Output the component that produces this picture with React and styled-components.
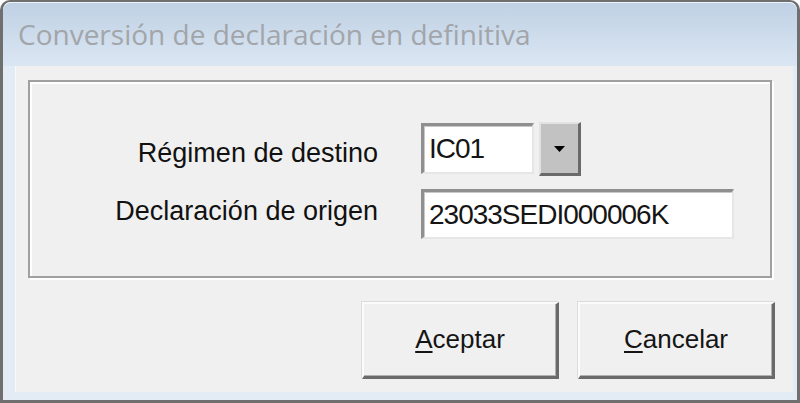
import React from "react";
import styled, { createGlobalStyle } from "styled-components";

const Global = createGlobalStyle`
  html, body { margin: 0; padding: 0; background: #ffffff; }
  body { width: 800px; height: 403px; overflow: hidden; }
  * { box-sizing: border-box; }
`;

const Window = styled.div`
  width: 800px;
  height: 403px;
  border: 3px solid #6f6f6f;
  border-top-width: 2px;
  border-radius: 10px 10px 0 0;
  background: #e3ebf5;
  display: flex;
  flex-direction: column;
  overflow: hidden;
`;

const TitleBar = styled.div`
  height: 64px;
  flex: none;
  display: flex;
  align-items: center;
  padding: 0 0 2px 15px;
  background: linear-gradient(#bfd1e4, #dbe6f3);
  border-top: 1px solid #eef3f9;
  border-radius: 8px 8px 0 0;
  font-family: "Open Sans", "Noto Sans", sans-serif;
  font-size: 28px;
  color: #a2a5a9;
  white-space: nowrap;
`;

const Frame = styled.div`
  flex: 1;
  display: flex;
  padding: 0 4px 8px 12px;
`;

const Client = styled.div`
  flex: 1;
  display: flex;
  flex-direction: column;
  background: #f0f0f0;
  padding: 14px 18px 0 12px;
  border-left: 1px solid #f7f9fc;
`;

const Group = styled.div`
  height: 198px;
  margin-right: 3px;
  border: 2px solid #a0a0a0;
  box-shadow: inset 2px 2px 0 #ffffff, 2px 2px 0 #ffffff;
  padding-top: 41px;
  display: grid;
  grid-template-columns: 348px auto;
  grid-template-rows: 53px 50px;
  column-gap: 43px;
  row-gap: 13px;
  align-items: center;
  align-content: start;
`;

const Label = styled.div`
  justify-self: end;
  font-family: "Liberation Sans", Arial, sans-serif;
  font-size: 27px;
  color: #111;
  white-space: nowrap;
  margin-top: ${(p) => p.$dy || 0}px;
`;

const Combo = styled.div`
  display: flex;
  gap: 5px;
  align-items: stretch;
  height: 53px;
`;

const Field = styled.div`
  width: ${(p) => p.$w}px;
  height: ${(p) => p.$h}px;
  align-self: ${(p) => (p.$top ? "start" : "center")};
  background: #ffffff;
  border-top: 3px solid #8f8f8f;
  border-left: 3px solid #8f8f8f;
  border-bottom: 2px solid #e6e6e6;
  border-right: 2px solid #e6e6e6;
  box-shadow: inset 1px 1px 0 #c8c8c8;
  padding: 0 0 0 5px;
  display: flex;
  align-items: center;
  font-family: "Liberation Sans", Arial, sans-serif;
  font-size: 28px;
  letter-spacing: -1px;
  color: #151515;
  white-space: nowrap;
`;

const DropButton = styled.div`
  width: 42px;
  height: 54px;
  margin-top: -1px;
  background: #c2c2c2;
  border-top: 2px solid #e2e2e2;
  border-left: 2px solid #e2e2e2;
  border-right: 3px solid #6a6a6a;
  border-bottom: 3px solid #6a6a6a;
  display: flex;
  align-items: center;
  justify-content: center;
`;

const ButtonRow = styled.div`
  margin-top: 24px;
  display: flex;
  justify-content: flex-end;
  gap: 19px;
`;

const Button = styled.button`
  width: 197px;
  height: 77px;
  background: #f0f0f0;
  border-top: 2px solid #fbfbfb;
  border-left: 2px solid #fbfbfb;
  border-right: 3px solid #6a6a6a;
  border-bottom: 3px solid #6a6a6a;
  box-shadow: inset -1px -1px 0 #b0b0b0, -1px -1px 0 #dcdcdc;
  font-family: "Liberation Sans", Arial, sans-serif;
  font-size: 26px;
  color: #151515;
  padding: 0 0 2px 0;
  cursor: default;

  u {
    text-decoration-thickness: 2px;
    text-underline-offset: 3px;
  }
`;

export default function App() {
  return (
    <>
      <Global />
      <Window>
        <TitleBar>Conversión de declaración en definitiva</TitleBar>
        <Frame>
          <Client>
            <Group>
              <Label $dy={8}>Régimen de destino</Label>
              <Combo>
                <Field $w={113} $h={51} $top>
                  IC01
                </Field>
                <DropButton>
                  <svg width="11" height="6" viewBox="0 0 11 6">
                    <polygon points="0,0 11,0 5.5,6" fill="#000" />
                  </svg>
                </DropButton>
              </Combo>
              <Label $dy={-6}>Declaración de origen</Label>
              <Field $w={313} $h={50}>
                23033SEDI000006K
              </Field>
            </Group>
            <ButtonRow>
              <Button>
                <u>A</u>ceptar
              </Button>
              <Button>
                <u>C</u>ancelar
              </Button>
            </ButtonRow>
          </Client>
        </Frame>
      </Window>
    </>
  );
}
